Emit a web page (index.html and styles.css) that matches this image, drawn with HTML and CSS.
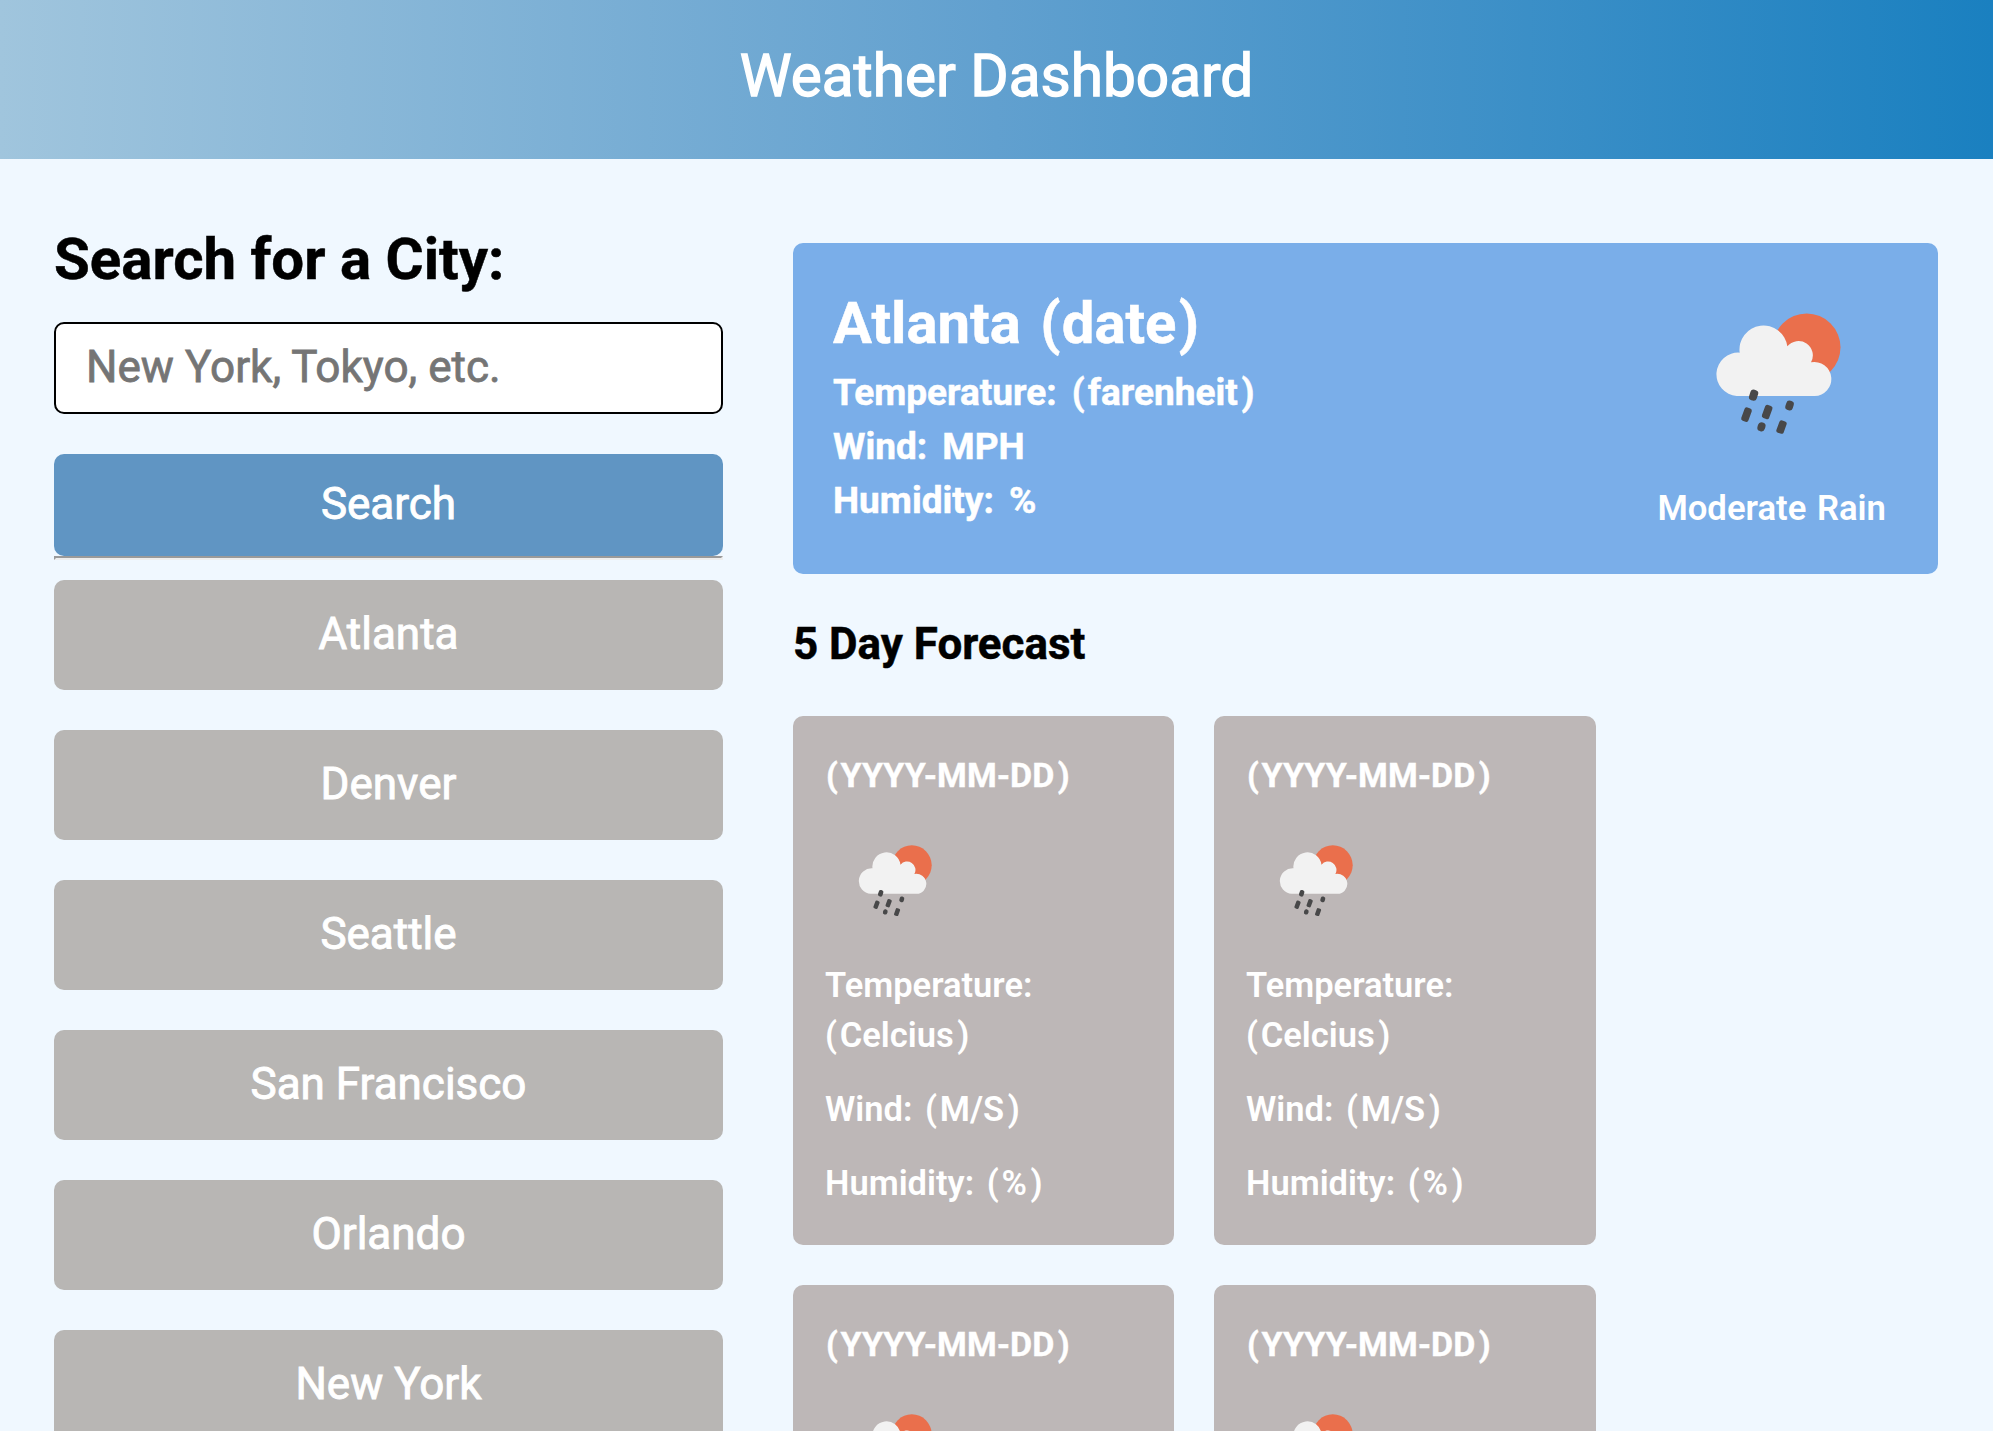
FILE: index.html
```html
<!DOCTYPE html>
<html lang="en">
<head>
<meta charset="utf-8">
<title>Weather Dashboard</title>
<link rel="stylesheet" href="styles.css">
</head>
<body>
<svg class="sprite" aria-hidden="true">
  <symbol id="rain" viewBox="228 250 378 362">
    <circle cx="503" cy="353" r="101.500" fill="#ea6f4c"/>
    <path d="M293 499a65 65 0 1 1 9-130a72 72 0 1 1 143-19a43 43 0 0 1 71 48a51 51 0 1 1 11 101z" fill="#f2f2f2"/>
    <g fill="#484849">
      <rect x="332" y="480" width="24" height="33" rx="10" transform="rotate(18 344 496)"/>
      <rect x="311" y="534" width="23" height="42" rx="7" transform="rotate(20 322.500 555)"/>
      <rect x="373" y="526" width="23" height="42" rx="7" transform="rotate(20 384.500 547)"/>
      <rect x="440" y="513" width="23" height="29" rx="10" transform="rotate(18 451.500 528)"/>
      <rect x="356" y="578" width="23" height="27" rx="11" transform="rotate(18 367.500 591)"/>
      <rect x="416" y="573" width="23" height="39" rx="7" transform="rotate(20 427.500 592.500)"/>
    </g>
  </symbol>
</svg>
<header class="header"><h1 class="header-title">Weather Dashboard</h1></header>
<main class="layout">
  <aside class="search">
    <h2 class="search-title">Search for a City:</h2>
    <input class="search-input" type="text" placeholder="New York, Tokyo, etc.">
    <button class="button search-button">Search</button>
    <hr class="divider">
    <div class="cities">
      <button class="button city">Atlanta</button>
      <button class="button city">Denver</button>
      <button class="button city">Seattle</button>
      <button class="button city">San Francisco</button>
      <button class="button city">Orlando</button>
      <button class="button city">New York</button>
    </div>
  </aside>
  <section class="weather">
    <article class="current">
      <div>
        <h2 class="current-title">Atlanta <span class="open">(</span>date<span class="close">)</span></h2>
        <p class="current-line">Temperature: <span class="open">(</span>farenheit<span class="close">)</span></p>
        <p class="current-line">Wind: MPH</p>
        <p class="current-line">Humidity: %</p>
      </div>
      <div class="conditions">
        <svg class="icon-large"><use href="#rain"/></svg>
        <p class="conditions-label">Moderate Rain</p>
      </div>
    </article>
    <h3 class="forecast-title">5 Day Forecast</h3>
    <div class="forecast">
      <article class="day">
        <h4 class="day-date"><span class="open">(</span>YYYY-MM-DD<span class="close">)</span></h4>
        <svg class="icon-small"><use href="#rain"/></svg>
        <p class="day-line">Temperature: <span class="open">(</span>Celcius<span class="close">)</span></p>
        <p class="day-line">Wind: <span class="open">(</span>M/S<span class="close">)</span></p>
        <p class="day-line">Humidity: <span class="open">(</span>%<span class="close">)</span></p>
      </article>
      <article class="day">
        <h4 class="day-date"><span class="open">(</span>YYYY-MM-DD<span class="close">)</span></h4>
        <svg class="icon-small"><use href="#rain"/></svg>
        <p class="day-line">Temperature: <span class="open">(</span>Celcius<span class="close">)</span></p>
        <p class="day-line">Wind: <span class="open">(</span>M/S<span class="close">)</span></p>
        <p class="day-line">Humidity: <span class="open">(</span>%<span class="close">)</span></p>
      </article>
      <article class="day">
        <h4 class="day-date"><span class="open">(</span>YYYY-MM-DD<span class="close">)</span></h4>
        <svg class="icon-small"><use href="#rain"/></svg>
      </article>
      <article class="day">
        <h4 class="day-date"><span class="open">(</span>YYYY-MM-DD<span class="close">)</span></h4>
        <svg class="icon-small"><use href="#rain"/></svg>
      </article>
    </div>
  </section>
</main>
</body>
</html>
```
FILE: styles.css
```css
* { box-sizing: border-box; margin: 0; }
body {
  height: 1431px;
  overflow: hidden;
  background: #f0f8ff;
  color: #000;
  font-family: Roboto, sans-serif;
}
.sprite { display: none; }
.header {
  height: 159px;
  padding-top: 36px;
  background: linear-gradient(to right, #a0c5dd, #61a0cf 50%, #1a80c0);
  color: #fff;
  text-align: center;
}
.header-title {
  font-size: 58.5px;
  font-weight: 400;
  line-height: 81px;
  -webkit-text-stroke: 1.3px #fff;
}
.layout {
  display: grid;
  grid-template-columns: 669px 1145px;
  column-gap: 70px;
  padding-left: 54px;
}
.search { padding-top: 60px; }
.search-title {
  font-size: 58.2px;
  font-weight: 700;
  line-height: 80px;
  -webkit-text-stroke: 0.5px #000;
}
.search-input {
  display: block;
  width: 100%;
  height: 92px;
  margin-top: 23px;
  padding: 0 30px 3px;
  border: 2px solid #000;
  border-radius: 10px;
  background: #fff;
  font: 400 44.1px Roboto, sans-serif;
}
.search-input::placeholder {
  color: #757575;
  -webkit-text-stroke: 0.8px #757575;
}
.button {
  display: block;
  width: 100%;
  border: 0;
  border-radius: 10px;
  color: #fff;
  font: 400 44px Roboto, sans-serif;
  -webkit-text-stroke: 0.9px #fff;
  padding: 0 0 2px;
}
.search-button {
  height: 102px;
  margin-top: 40px;
  background: #6095c3;
}
.divider {
  height: 4px;
  border: 2px solid;
  border-color: #9a9a9a #eee #eee #9a9a9a;
}
.cities {
  display: grid;
  gap: 40px;
  margin-top: 20px;
}
.city { height: 110px; background: #b8b6b4; }
.weather { padding-top: 84px; }
.current {
  display: flex;
  justify-content: space-between;
  height: 331px;
  padding: 38px 52px 0 40px;
  border-radius: 10px;
  background: #7aaee9;
  color: #fff;
  word-spacing: 0.12em;
}
.current-title {
  font-size: 58px;
  font-weight: 700;
  line-height: 85px;
  word-spacing: 0.09em;
  -webkit-text-stroke: 0.5px #fff;
}
.current-title .open { margin-right: 0.02em; }
.current-title .close { margin-left: 0.04em; }
.current-line {
  font-size: 37px;
  font-weight: 700;
  line-height: 54px;
  word-spacing: 0.16em;
  -webkit-text-stroke: 0.5px #fff;
}
.open { margin-right: 0.08em; }
.close { margin-left: 0.1em; }
.conditions {
  display: flex;
  flex-direction: column;
  padding-top: 32px;
}
.icon-large { width: 126px; height: 120.7px; margin-left: 58px; }
.conditions-label {
  margin-top: 49px;
  font-size: 34.7px;
  font-weight: 600;
  line-height: 50px;
}
.forecast-title {
  margin-top: 45px;
  font-size: 43.9px;
  font-weight: 700;
  line-height: 51px;
  -webkit-text-stroke: 0.5px #000;
}
.forecast {
  display: grid;
  grid-template-columns: 381px 382px;
  gap: 40px;
  margin-top: 46px;
}
.day {
  height: 529px;
  padding: 34px 32px 0;
  border-radius: 10px;
  background: #bdb7b7;
  color: #fff;
  font-size: 34.5px;
  line-height: 50px;
  word-spacing: 0.12em;
}
.day-date {
  padding-left: 1px;
  font-size: 34px;
  font-weight: 700;
  -webkit-text-stroke: 0.4px #fff;
}
.icon-small { display: block; width: 74px; height: 71px; margin: 45px 0 44px 33px; }
.day-line { margin-bottom: 24px; font-weight: 600; }
```
